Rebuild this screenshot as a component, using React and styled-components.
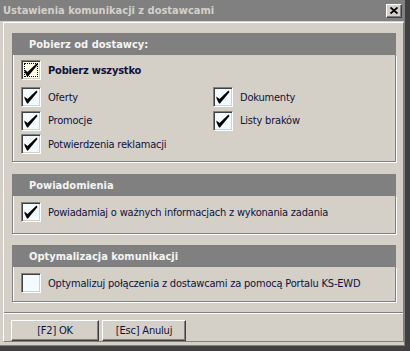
import React from "react";
import styled, { createGlobalStyle } from "styled-components";

const GlobalStyle = createGlobalStyle`
  html, body { margin: 0; padding: 0; background: #404040; }
  body { font-family: "DejaVu Sans", Verdana, sans-serif; font-stretch: semi-condensed; }
`;

const Window = styled.div`
  width: 405px;
  height: 346px;
  background: #d4d0c8;
  display: flex;
  flex-direction: column;
  box-sizing: border-box;
  border-right: 1px solid #808080;
  border-bottom: 1px solid #808080;
`;

const TitleBar = styled.div`
  height: 21px;
  background: #808080;
  display: flex;
  align-items: center;
  justify-content: space-between;
  padding: 0 2px 0 3px;
  flex: none;
`;

const TitleText = styled.span`
  color: #d4d0c8;
  font-weight: bold;
  font-size: 11px;
`;

const CloseButton = styled.div`
  width: 16px;
  height: 14px;
  box-sizing: border-box;
  background: #d4d0c8;
  border: 1px solid;
  border-color: #fff #404040 #404040 #fff;
  box-shadow: inset -1px -1px 0 #808080;
  display: flex;
  align-items: center;
  justify-content: center;
`;

const Body = styled.div`
  flex: 1;
  padding: 1px 3px 3px 3px;
  display: flex;
  min-height: 0;
`;

const Panel = styled.div`
  flex: 1;
  border: 1px solid;
  border-color: #fff #808080 #808080 #fff;
  display: flex;
  flex-direction: column;
  padding: 10px 7px 0 8px;
`;

const Section = styled.div`
  width: 384px;
  display: flex;
  flex-direction: column;
  margin-bottom: ${(p) => p.$gap}px;
`;

const SectionHeader = styled.div`
  height: 22px;
  background: #808080;
  color: #f4f4f4;
  font-weight: bold;
  font-size: 11px;
  display: flex;
  align-items: center;
  padding-left: 17px;
`;

const SectionBody = styled.div`
  border: 1px solid #808080;
  border-top: none;
  box-shadow: inset 1px 0 0 #fff, 1px 1px 0 #fff;
  padding: ${(p) => p.$pad};
`;

const Grid = styled.div`
  display: grid;
  grid-template-columns: 192px 1fr;
  grid-auto-rows: 20px;
  row-gap: 3.5px;
  margin-top: 7px;
`;

const Row = styled.label`
  display: flex;
  align-items: center;
  gap: 7px;
  height: 20px;
  font-size: 11px;
  letter-spacing: -0.2px;
  color: #10103c;
  font-weight: ${(p) => (p.$bold ? "bold" : "normal")};
  white-space: nowrap;
`;

const Box = styled.span`
  width: 20px;
  height: 20px;
  box-sizing: border-box;
  flex: none;
  border: 1px solid;
  border-color: #808080 #fff #fff #808080;
  box-shadow: inset 1px 1px 0 #404040, inset -1px -1px 0 #d4d0c8;
  background: ${(p) => (p.$focus ? "#ffffe1" : "#f4fbff")};
  position: relative;
  display: flex;
  align-items: center;
  justify-content: center;
`;

const Focus = styled.span`
  position: absolute;
  inset: 2px;
  border: 1px dotted #000;
`;

const Separator = styled.div`
  height: 0;
  border-top: 1px solid #808080;
  border-bottom: 1px solid #fff;
  margin: 0 -7px 0 -8px;
`;

const Buttons = styled.div`
  display: flex;
  gap: 3px;
  padding: 6px 0 0 7px;
  margin-left: -8px;
`;

const Button = styled.button`
  width: ${(p) => p.$w}px;
  height: 21px;
  box-sizing: border-box;
  background: #d4d0c8;
  border: 1px solid;
  border-color: #fff #404040 #404040 #fff;
  box-shadow: inset -1px -1px 0 #808080;
  font-family: "DejaVu Sans", Verdana, sans-serif;
  font-stretch: semi-condensed;
  font-size: 11px;
  letter-spacing: -0.2px;
  color: #10103c;
  padding: 0;
`;

const Check = () => (
  <svg width="16" height="16" viewBox="0 0 16 16">
    <path d="M1.5 7.5 L4.5 10 L13.5 1.5 L14.5 3 L5 14.5 L4 14.5 L1.5 9.5 Z" fill="#000" />
  </svg>
);

const CheckBox = ({ checked, focus, label, bold }) => (
  <Row $bold={bold}>
    <Box $focus={focus}>
      {focus && <Focus />}
      {checked && <Check />}
    </Box>
    <span>{label}</span>
  </Row>
);

export default function App() {
  return (
    <>
      <GlobalStyle />
      <Window>
        <TitleBar>
          <TitleText>Ustawienia komunikacji z dostawcami</TitleText>
          <CloseButton>
            <svg width="8" height="7" viewBox="0 0 8 7">
              <path d="M0.5 0.5 L7.5 6.5 M7.5 0.5 L0.5 6.5" stroke="#000" strokeWidth="1.8" />
            </svg>
          </CloseButton>
        </TitleBar>
        <Body>
          <Panel>
            <Section $gap={12}>
              <SectionHeader>Pobierz od dostawcy:</SectionHeader>
              <SectionBody $pad="5px 8px 7px 8px">
                <CheckBox checked focus bold label="Pobierz wszystko" />
                <Grid>
                  <CheckBox checked label="Oferty" />
                  <CheckBox checked label="Dokumenty" />
                  <CheckBox checked label="Promocje" />
                  <CheckBox checked label="Listy braków" />
                  <CheckBox checked label="Potwierdzenia reklamacji" />
                </Grid>
              </SectionBody>
            </Section>
            <Section $gap={11}>
              <SectionHeader>Powiadomienia</SectionHeader>
              <SectionBody $pad="6px 8px 11px 8px">
                <CheckBox checked label="Powiadamiaj o ważnych informacjach z wykonania zadania" />
              </SectionBody>
            </Section>
            <Section $gap={10}>
              <SectionHeader>Optymalizacja komunikacji</SectionHeader>
              <SectionBody $pad="6px 8px 8px 8px">
                <CheckBox label="Optymalizuj połączenia z dostawcami za pomocą Portalu KS-EWD" />
              </SectionBody>
            </Section>
            <Separator />
            <Buttons>
              <Button $w={88}>[F2] OK</Button>
              <Button $w={84}>[Esc] Anuluj</Button>
            </Buttons>
          </Panel>
        </Body>
      </Window>
    </>
  );
}
